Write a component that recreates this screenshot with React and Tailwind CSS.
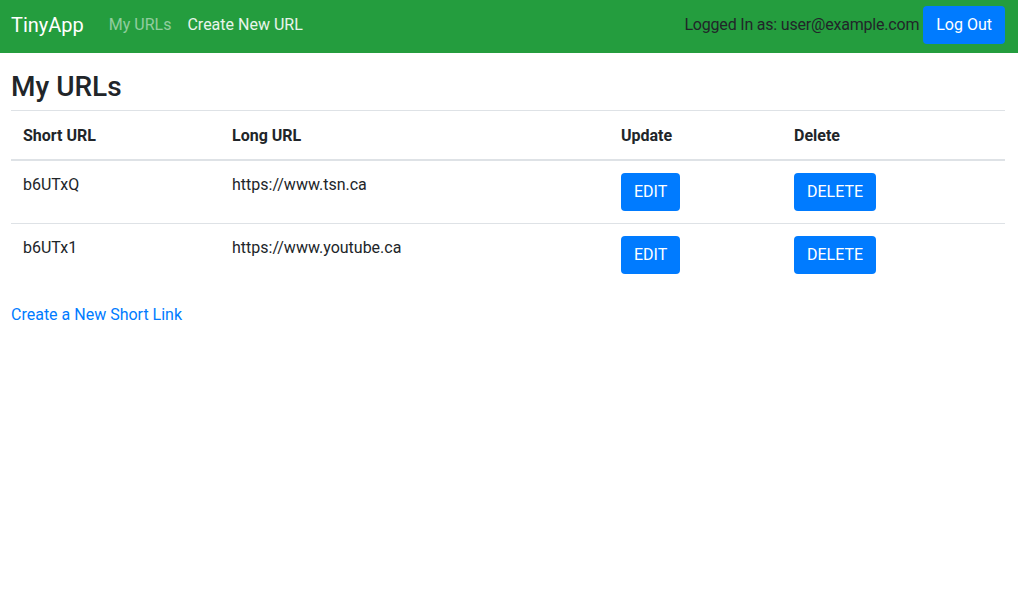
const urls = [
  { id: "b6UTxQ", longURL: "https://www.tsn.ca" },
  { id: "b6UTx1", longURL: "https://www.youtube.ca" },
];

const Navbar = () => {
  return (
    <nav className="h-[53px] bg-[#249d3e] flex items-center pl-[11px] pr-[13px] pb-[3px]">
      <a href="#" className="text-white text-[20px] mr-[25px]">TinyApp</a>
      <a href="#" className="text-white/50 px-0 mr-[16px]">My URLs</a>
      <a href="#" className="text-white/90">Create New URL</a>
      <div className="ml-auto flex items-center">
        <span className="text-[#212529] mr-[4px] tracking-[-0.2px]">Logged In as: user@example.com</span>
        <button className="bg-[#007bff] text-white h-[38px] px-[13px] rounded-[4px]">
          Log Out
        </button>
      </div>
    </nav>
  );
};

const App = () => {
  return (
    <div
      className="min-h-screen bg-white text-[#212529] text-[16px] leading-[24px]"
      style={{ fontFamily: "Roboto, 'Noto Sans', sans-serif" }}
    >
      <Navbar />

      <main className="pl-[11px] pr-[13px]">
        <h3 className="text-[28px] leading-[34px] font-medium mt-[17px] mb-[6px]">My URLs</h3>

        <table className="w-full border-collapse">
          <thead>
            <tr className="border-t border-[#dee2e6]">
              <th className="w-[209px] text-left font-bold px-[12px] pt-[13px] pb-[11px] border-b-2 border-[#dee2e6]">Short URL</th>
              <th className="w-[389px] text-left font-bold px-[12px] pt-[13px] pb-[11px] border-b-2 border-[#dee2e6]">Long URL</th>
              <th className="w-[173px] text-left font-bold px-[12px] pt-[13px] pb-[11px] border-b-2 border-[#dee2e6]">Update</th>
              <th className="text-left font-bold px-[12px] pt-[13px] pb-[11px] border-b-2 border-[#dee2e6]">Delete</th>
            </tr>
          </thead>
          <tbody>
            {urls.map((url, i) => (
              <tr key={url.id} className={`align-top ${i > 0 ? "border-t border-[#dee2e6]" : ""}`}>
                <td className="p-[12px]">{url.id}</td>
                <td className="p-[12px]">{url.longURL}</td>
                <td className="p-[12px]">
                  <button className="bg-[#007bff] text-white h-[38px] px-[13px] rounded-[4px]">EDIT</button>
                </td>
                <td className="p-[12px]">
                  <button className="bg-[#007bff] text-white h-[38px] px-[13px] rounded-[4px]">DELETE</button>
                </td>
              </tr>
            ))}
          </tbody>
        </table>

        <a href="#" className="block mt-[17px] text-[#007bff]">Create a New Short Link</a>
      </main>
    </div>
  );
};

export default App;
